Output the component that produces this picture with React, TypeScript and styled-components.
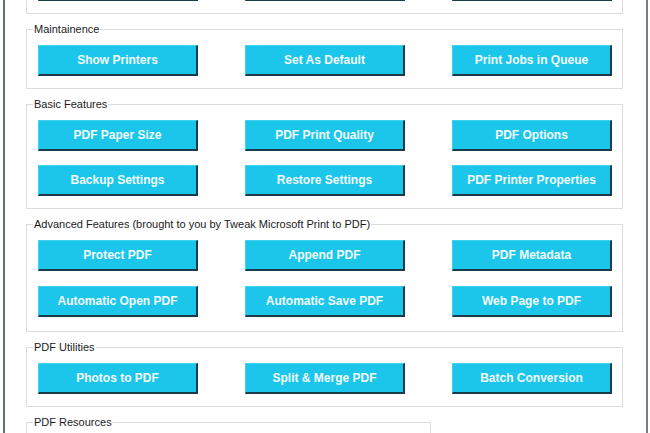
import styled, { createGlobalStyle } from "styled-components";

const GlobalStyle = createGlobalStyle`
    html, body {
        margin: 0;
        background: #ffffff;
    }
    body {
        font-family: "Liberation Sans", Arial, sans-serif;
    }
`

const Window = styled.div`
    box-sizing: border-box;
    margin-left: 3px;
    width: 645px;
    height: 433px;
    overflow: hidden;
    background: #ffffff;
    border-left: 2px solid #5c6f7f;
    border-right: 2px solid #6f7f8c;
    padding-left: 21px;
`

// the dialog is scrolled a little, so the first group is cut off at the top
const ScrollArea = styled.div`
    display: flex;
    flex-direction: column;
    align-items: flex-start;
    gap: 9px;
    margin-top: -52px;
`

const Group = styled.fieldset<{ $width?: number; $noLabel?: boolean; $padBottom?: number }>`
    box-sizing: border-box;
    width: ${props => props.$width ?? 597}px;
    margin: 0;
    border: 1px solid #dcdcdc;
    padding: ${props => props.$noLabel ? 21 : 9}px 10px ${props => props.$padBottom ?? 12}px 11px;
    min-width: 0;
`

const GroupLabel = styled.legend`
    margin-left: -5px;
    padding: 0 1px;
    font-size: 11px;
    line-height: 13px;
    color: #1b1b1b;
`

const ButtonGrid = styled.div<{ $rowGap?: number }>`
    display: grid;
    grid-template-columns: repeat(3, 160px);
    justify-content: space-between;
    row-gap: ${props => props.$rowGap ?? 14}px;
`

const ActionButton = styled.button`
    box-sizing: border-box;
    height: 31px;
    padding: 0 0 1px 0;
    border: none;
    border-top: 1px solid #3fd3ef;
    border-left: 1px solid #3fd3ef;
    border-right: 2px solid #1b3b49;
    border-bottom: 2px solid #1b3b49;
    border-radius: 0;
    background: #1cc6ea;
    color: #f2fcff;
    font-family: "Liberation Sans", Arial, sans-serif;
    font-weight: bold;
    font-size: 12px;
    cursor: pointer;
`

const Empty = styled.div`
    height: 60px;
`

type GroupData = {
    title?: string;
    buttons: string[];
    rowGap?: number;
    padBottom?: number;
}

const groups: GroupData[] = [
    // only the bottom edge of this group is in view, its labels are scrolled away
    {
        buttons: ["", "", ""],
    },
    {
        title: "Maintainence",
        buttons: ["Show Printers", "Set As Default", "Print Jobs in Queue"],
    },
    {
        title: "Basic Features",
        buttons: [
            "PDF Paper Size", "PDF Print Quality", "PDF Options",
            "Backup Settings", "Restore Settings", "PDF Printer Properties",
        ],
    },
    {
        title: "Advanced Features (brought to you by Tweak Microsoft Print to PDF)",
        buttons: [
            "Protect PDF", "Append PDF", "PDF Metadata",
            "Automatic Open PDF", "Automatic Save PDF", "Web Page to PDF",
        ],
        rowGap: 15,
        padBottom: 14,
    },
    {
        title: "PDF Utilities",
        buttons: ["Photos to PDF", "Split & Merge PDF", "Batch Conversion"],
    },
]

export default function App() {
    return <>
        <GlobalStyle />
        <Window>
            <ScrollArea>
                {groups.map((group, i) =>
                    <Group key={i} $noLabel={!group.title} $padBottom={group.padBottom}>
                        {group.title && <GroupLabel>{group.title}</GroupLabel>}
                        <ButtonGrid $rowGap={group.rowGap}>
                            {group.buttons.map((label, j) =>
                                <ActionButton key={j}>{label}</ActionButton>
                            )}
                        </ButtonGrid>
                    </Group>
                )}
                <Group $width={405}>
                    <GroupLabel>PDF Resources</GroupLabel>
                    <Empty />
                </Group>
            </ScrollArea>
        </Window>
    </>;
}
